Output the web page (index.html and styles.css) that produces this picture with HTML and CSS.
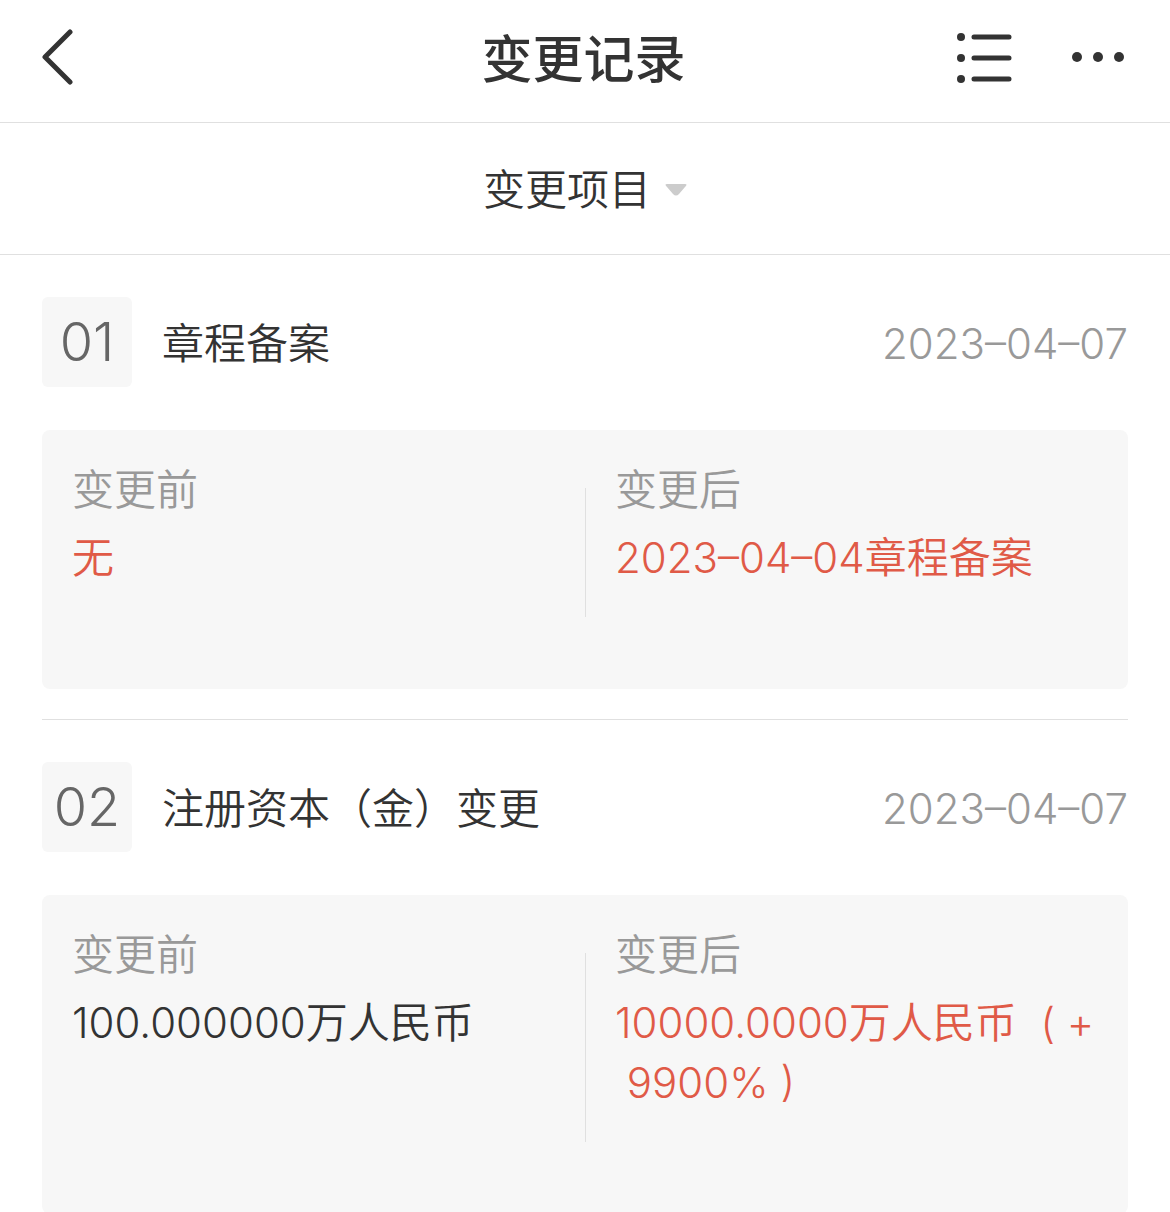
FILE: index.html
```html
<!DOCTYPE html>
<html lang="zh-CN">
<head>
    <meta charset="UTF-8">
    <meta name="viewport" content="width=device-width">
    <title>变更记录</title>
    <link rel="stylesheet" href="styles.css">
</head>
<body>
    <header class="header">
        <button type="button" class="back" aria-label="返回">
            <svg width="32" height="58" viewBox="0 0 32 58"><path d="M29 4L4 29L29 54"/></svg>
        </button>
        <h1>变更记录</h1>
        <div class="tools">
            <button type="button" aria-label="目录">
                <svg width="56" height="52" viewBox="0 0 56 52">
                    <path d="M18 6H53M18 27H53M18 48H53"/>
                    <circle cx="5" cy="6" r="4"/>
                    <circle cx="5" cy="27" r="4"/>
                    <circle cx="5" cy="48" r="4"/>
                </svg>
            </button>
            <button type="button" aria-label="更多">
                <svg width="54" height="52" viewBox="0 0 54 52">
                    <circle cx="5" cy="26" r="5"/>
                    <circle cx="26" cy="26" r="5"/>
                    <circle cx="47" cy="26" r="5"/>
                </svg>
            </button>
        </div>
    </header>

    <div class="filter">
        <button type="button">变更项目
            <svg width="22" height="14" viewBox="0 0 22 14"><path d="M2 1H20Q23 1 20 4L14 11Q11 14 8 11L2 4Q-1 1 2 1Z"/></svg>
        </button>
    </div>

    <main>
        <section class="record">
            <div class="record-head">
                <span class="num">01</span>
                <h2>章程备案</h2>
                <time datetime="2023-04-07">2023–04–07</time>
            </div>
            <div class="panel">
                <dl>
                    <dt>变更前</dt>
                    <dd class="red">无</dd>
                </dl>
                <dl>
                    <dt>变更后</dt>
                    <dd class="red">2023–04–04章程备案</dd>
                </dl>
            </div>
        </section>
        <section class="record">
            <div class="record-head">
                <span class="num">02</span>
                <h2>注册资本（金）变更</h2>
                <time datetime="2023-04-07">2023–04–07</time>
            </div>
            <div class="panel">
                <dl>
                    <dt>变更前</dt>
                    <dd>100.000000万人民币</dd>
                </dl>
                <dl>
                    <dt>变更后</dt>
                    <dd class="red">10000.0000万人民币&nbsp;&nbsp;(&nbsp;+<br>&nbsp;9900%&nbsp;)</dd>
                </dl>
            </div>
        </section>
    </main>
</body>
</html>
```
FILE: styles.css
```css
* {margin: 0;padding: 0;box-sizing: border-box;}

body{
    background-color: #fff;
    color: #333;
    font-family: Inter, "Noto Sans CJK SC", sans-serif;
    font-size: 42px;
    font-weight: 350;
    line-height: 60px;
}
button{
    border: 0;
    background: none;
    color: inherit;
    font: inherit;
    cursor: pointer;
}
svg{
    display: block;
}

.header{
    display: grid;
    grid-template-columns: 1fr auto 1fr;
    align-items: center;
    height: 123px;
    padding: 0 44px 8px 41px;
    border-bottom: 1px solid #e0e0e0;
}
.header h1{
    padding-top: 6px;
    font-size: 51px;
    font-weight: 500;
}
.header svg{
    fill: #333;
}
.header path{
    fill: none;
    stroke: #333;
    stroke-width: 5;
    stroke-linecap: round;
    stroke-linejoin: round;
}
.back{
    justify-self: start;
}
.tools{
    display: flex;
    justify-self: end;
    gap: 60px;
}

.filter{
    display: flex;
    justify-content: center;
    height: 132px;
    padding-top: 2px;
    border-bottom: 1px solid #e0e0e0;
}
.filter button{
    display: flex;
    align-items: center;
    gap: 14px;
}
.filter svg{
    fill: #ccc;
}

.record{
    margin: 0 42px;
    padding: 42px 0 30px;
    border-bottom: 1px solid #e0e0e0;
}
.record-head{
    display: flex;
    align-items: center;
    margin-bottom: 43px;
}
.num{
    width: 90px;
    margin-right: 30px;
    border-radius: 6px;
    background-color: #f7f7f7;
    color: #666;
    font-size: 54px;
    line-height: 90px;
    text-align: center;
}
.record h2{
    flex: 1;
    padding-top: 4px;
    font-size: 42px;
    font-weight: 350;
}
.record time{
    padding-top: 4px;
    color: #999;
}

.panel{
    position: relative;
    display: grid;
    grid-template-columns: 1fr 1fr;
    border-radius: 8px;
    background-color: #f7f7f7;
}
/* 中间分隔线 */
.panel::after{
    content: "";
    position: absolute;
    top: 58px;
    bottom: 72px;
    left: 50%;
    width: 1px;
    background-color: #e0e0e0;
}
.panel dl{
    padding: 30px 30px 101px;
}
.panel dt{
    margin-bottom: 8px;
    color: #999;
}
.panel .red{
    color: #e05a47;
}
```
